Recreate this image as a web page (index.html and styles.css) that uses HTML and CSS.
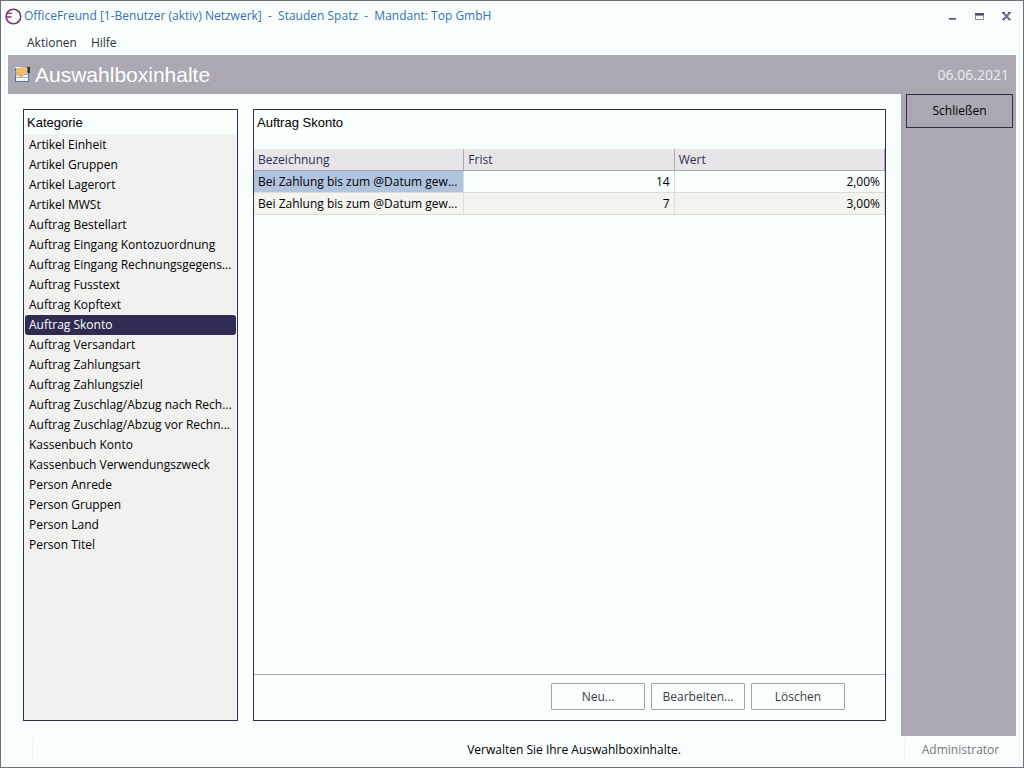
FILE: index.html
```html
<!DOCTYPE html>
<html lang="de">
<head>
<meta charset="utf-8">
<title>OfficeFreund</title>
<link rel="stylesheet" href="styles.css">
</head>
<body>
<div class="window">
  <header class="titlebar">
    <svg class="logo" width="17" height="17" viewBox="0 0 17 17" fill="none" stroke="#85306f" stroke-width="1.6"><circle cx="8.4" cy="8.5" r="7.3"/><path d="M2 5.4H7M1 9H6.5" stroke-width="1.4"/></svg>
    <span class="caption">OfficeFreund [1-Benutzer (aktiv) Netzwerk] &nbsp;-&nbsp; Stauden Spatz &nbsp;-&nbsp; Mandant: Top GmbH</span>
    <div class="controls">
      <button class="control" aria-label="Minimieren"><svg width="11" height="11" viewBox="0 0 11 11"><path fill="#4c5266" d="M2 7h7v1H2z"/><path fill="#8790a8" d="M2 8h7v1H2z"/></svg></button>
      <button class="control" aria-label="Maximieren"><svg width="11" height="11" viewBox="0 0 11 11"><path fill="#8790a8" d="M1 2h9v7H1zM2 5v3h7V5z" fill-rule="evenodd"/><path fill="#4c5266" d="M1 2h9v2H1z"/></svg></button>
      <button class="control" aria-label="Fenster schließen"><svg width="11" height="11" viewBox="0 0 11 11"><path d="M2 1.5l7 7.5M9 1.5L2 9" stroke="#69718a" stroke-width="2"/><path fill="#4c5266" d="M1 1h3v1H1zM7 1h3v1H7z"/><path fill="#69718a" d="M1 8h3v1H1zM7 8h3v1H7z"/></svg></button>
    </div>
  </header>
  <nav class="menubar">
    <button class="menu">Aktionen</button>
    <button class="menu">Hilfe</button>
  </nav>
  <div class="banner">
    <svg width="17" height="17" viewBox="0 0 17 17"><path fill="#f3f7ff" d="M1 1h13v15H1z"/><path fill="#4f74ad" d="M1 15h14v1H1zM14 7h1v9h-1zM1 2h1v14H1z"/><path fill="#8fb5e8" d="M2 8h12v1H2zM2 11h12v1H2z"/><path fill="#f3bf6e" stroke="#c18a3d" stroke-width=".5" d="M2 3l5-1 3-1h4v6l-3 1-2 2-3 1.500-1-1 2-2-4 1-1.500-1L5 6 2 7 1 6l2-2z"/><path fill="#30343c" d="M13 1h3v6h-2l-1-2z"/><path fill="#7b818c" d="M13 2h1v3h-1z"/></svg>
    <h1 class="heading">Auswahlboxinhalte</h1>
    <time class="date" datetime="2021-06-06">06.06.2021</time>
  </div>
  <div class="body">
    <main class="content">
      <section class="panel categories">
        <h2 class="panel-title">Kategorie</h2>
        <ul class="list">
          <li class="item">Artikel Einheit</li>
          <li class="item">Artikel Gruppen</li>
          <li class="item">Artikel Lagerort</li>
          <li class="item">Artikel MWSt</li>
          <li class="item">Auftrag Bestellart</li>
          <li class="item">Auftrag Eingang Kontozuordnung</li>
          <li class="item">Auftrag Eingang Rechnungsgegens...</li>
          <li class="item">Auftrag Fusstext</li>
          <li class="item">Auftrag Kopftext</li>
          <li class="item selected">Auftrag Skonto</li>
          <li class="item">Auftrag Versandart</li>
          <li class="item">Auftrag Zahlungsart</li>
          <li class="item">Auftrag Zahlungsziel</li>
          <li class="item">Auftrag Zuschlag/Abzug nach Rech...</li>
          <li class="item">Auftrag Zuschlag/Abzug vor Rechn...</li>
          <li class="item">Kassenbuch Konto</li>
          <li class="item">Kassenbuch Verwendungszweck</li>
          <li class="item">Person Anrede</li>
          <li class="item">Person Gruppen</li>
          <li class="item">Person Land</li>
          <li class="item">Person Titel</li>
        </ul>
      </section>
      <section class="panel details">
        <h2 class="panel-title">Auftrag Skonto</h2>
        <div class="grid">
          <table class="table">
            <thead><tr><th>Bezeichnung</th><th>Frist</th><th>Wert</th></tr></thead>
            <tbody>
              <tr><td class="active">Bei Zahlung bis zum @Datum gew...</td><td class="number">14</td><td class="number">2,00%</td></tr>
              <tr><td>Bei Zahlung bis zum @Datum gew...</td><td class="number">7</td><td class="number">3,00%</td></tr>
            </tbody>
          </table>
        </div>
        <div class="actions">
          <button class="action">Neu...</button>
          <button class="action">Bearbeiten...</button>
          <button class="action">Löschen</button>
        </div>
      </section>
    </main>
    <aside class="sidebar"><button class="close">Schließen</button></aside>
  </div>
  <footer class="status">
    <span class="hint">Verwalten Sie Ihre Auswahlboxinhalte.</span>
    <span class="user">Administrator</span>
  </footer>
</div>
</body>
</html>
```
FILE: styles.css
```css
* { box-sizing: border-box; }
body { margin: 0; background: #f8fefc; color: #000; font: 12px/20px "Open Sans", "Noto Sans", sans-serif; }
button { margin: 0; padding: 0; border: 0; background: none; color: inherit; font: inherit; }
h1, h2, ul { margin: 0; padding: 0; font-weight: 400; list-style: none; }
svg { display: block; flex: none; }
.window { display: flex; flex-direction: column; min-height: 100vh; border: 1px solid #6e6e7c; }
.titlebar { display: flex; align-items: center; gap: 2px; height: 30px; padding: 0 11px 0 4px; color: #3b6fb5; }
.caption { flex: 1; white-space: nowrap; }
.controls { display: flex; gap: 16px; }
.menubar { display: flex; gap: 14px; height: 24px; padding: 2px 26px; color: #303038; }
.banner { display: flex; align-items: center; gap: 4px; height: 39px; margin: 0 7px; padding: 0 7px 0 6px; background: #aba8b2; color: #fff; }
.heading { flex: 1; font: 21px/24px "Liberation Sans", Arial, sans-serif; }
.date { color: #eeedf2; font-size: 14px; }
.body { display: flex; flex: 1; margin: 0 7px; }
.content { display: flex; flex: 1; gap: 15px; padding: 15px; }
.panel { display: flex; flex-direction: column; border: 1px solid #2f2b52; }
.panel-title { padding: 1px 3px 0; font: 13px/23px "Liberation Sans", Arial, sans-serif; }
.categories { width: 215px; }
.list { flex: 1; padding: 1px; background: #f1f1ef; }
.item { padding: 0 4px; border-radius: 3px; white-space: nowrap; overflow: hidden; }
.selected { background: #2f2b52; color: #fff; }
.details { flex: 1; min-width: 0; }
.grid { flex: 1; padding-top: 15px; }
.table { width: 100%; table-layout: fixed; border-collapse: separate; border-spacing: 0; }
.table th, .table td { height: 22px; padding: 0 4px; border: solid #dcdcdc; border-width: 0 1px 1px 0; line-height: 20px; white-space: nowrap; overflow: hidden; }
.table th { border-color: #aba8b2; background: #e8e5e9; color: #2f2b52; font-weight: 400; text-align: left; }
.table .active { background: #b0c3df; }
.table .number { text-align: right; }
.table tbody tr:nth-child(2) td { background: #f4f4ef; }
.actions { display: flex; justify-content: flex-end; gap: 6px; height: 46px; padding: 8px 40px 10px; border-top: 1px solid #a9a9b5; }
.action { width: 94px; height: 27px; border: 1px solid #a3a3a6; border-radius: 1px; color: #3c3c46; }
.sidebar { width: 115px; padding: 0 3px 0 5px; background: #aba8b2; }
.close { width: 100%; height: 34px; border: 1px solid #2f2b52; }
.status { display: flex; height: 31px; padding: 4px 7px 5px 31px; }
.hint { flex: 1; padding-left: 211px; border-left: 1px solid #f1f3f2; text-align: center; }
.user { width: 112px; border-left: 1px solid #f1f3f2; color: #77777c; text-align: center; }
```
